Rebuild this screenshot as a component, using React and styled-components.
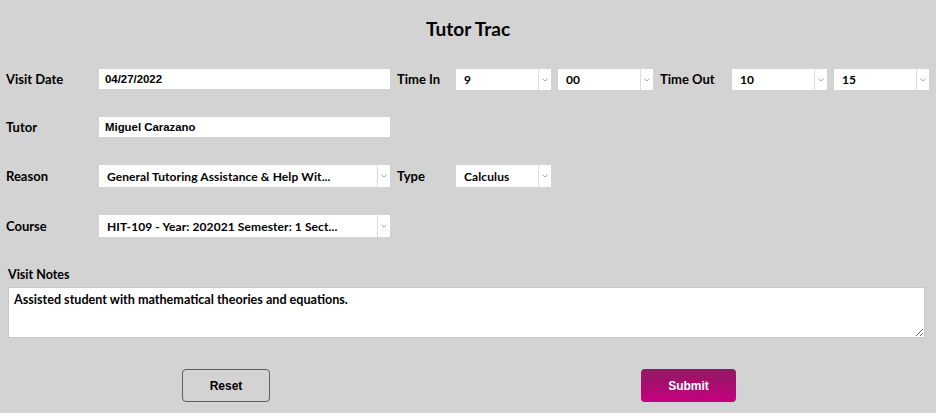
import React, { useState } from 'react'
import styled, { createGlobalStyle } from 'styled-components'

const GlobalStyle = createGlobalStyle`
  html, body {
    margin: 0;
    padding: 0;
    background: #d3d3d3;
  }
  body {
    font-family: Lato, 'Liberation Sans', sans-serif;
    color: #000;
  }
`

const Page = styled.div`
  width: 936px;
  height: 413px;
  background: #d3d3d3;
  overflow: hidden;
`

const Title = styled.h1`
  margin: 0;
  height: 56px;
  display: flex;
  align-items: center;
  justify-content: center;
  font-size: 19px;
  font-weight: 700;
`

const FieldsGrid = styled.div`
  display: grid;
  grid-template-columns: 86px 291px 52px 95px 95px 65px 95px 95px;
  grid-template-rows: 20px 20px 22px 22px;
  column-gap: 7px;
  row-gap: 28px;
  align-items: center;
  padding: 13px 0 0 6px;
`

const Label = styled.div`
  font-size: 13px;
  font-weight: 700;
  white-space: nowrap;
`

const TextInput = styled.input`
  box-sizing: border-box;
  height: 20px;
  width: 100%;
  border: none;
  background: #fff;
  padding: 0 6px;
  font-family: 'Liberation Sans', Arial, sans-serif;
  font-weight: 700;
  font-size: 11.4px;
  color: #000;
  outline: none;
`

const SelectBox = styled.div`
  box-sizing: border-box;
  display: flex;
  height: ${p => (p.$tall ? 22 : 21)}px;
  margin-top: ${p => (p.$tall ? 0 : 1)}px;
  width: 100%;
  background: #fff;
`

const SelectValue = styled.div`
  flex: 1;
  display: flex;
  align-items: center;
  padding-left: 8px;
  font-size: 12px;
  font-weight: 700;
  letter-spacing: 0.1px;
  white-space: nowrap;
  overflow: hidden;
`

const SelectArrow = styled.div`
  width: 12px;
  border-left: 1px solid #dcdcdc;
  display: flex;
  align-items: center;
  justify-content: center;
`

const Span = styled.div`
  grid-column: ${p => p.$col};
`

const NotesBlock = styled.div`
  padding: 30px 11px 0 8px;
`

const NotesLabel = styled(Label)`
  margin-bottom: 5px;
  font-size: 12.5px;
`

const Notes = styled.textarea`
  box-sizing: border-box;
  display: block;
  width: 100%;
  height: 51px;
  border: 1px solid #c8c8c8;
  background: #fff;
  padding: 4px 5px;
  font-family: Lato, 'Liberation Sans', sans-serif;
  font-weight: 700;
  font-size: 12.6px;
  color: #000;
  outline: none;
  resize: vertical;
`

const Actions = styled.div`
  display: flex;
  gap: 371px;
  padding: 31px 0 0 182px;
`

const Button = styled.button`
  box-sizing: border-box;
  width: ${p => (p.$primary ? 95 : 88)}px;
  height: 33px;
  border-radius: 4px;
  border: ${p => (p.$primary ? 'none' : '1px solid #5f5f5f')};
  background: ${p =>
    p.$primary ? 'linear-gradient(to bottom, #901a63, #c6007f)' : 'transparent'};
  color: ${p => (p.$primary ? '#fff' : '#000')};
  font-family: 'Liberation Sans', Arial, sans-serif;
  font-weight: 700;
  font-size: 12px;
  cursor: pointer;
`

const Chevron = () => (
  <svg width="6" height="4" viewBox="0 0 6 4">
    <path d="M0.5 0.8 L3 3 L5.5 0.8" fill="none" stroke="#a8a8a8" strokeWidth="1" />
  </svg>
)

const Select = ({ value, tall }) => (
  <SelectBox $tall={tall}>
    <SelectValue>{value}</SelectValue>
    <SelectArrow>
      <Chevron />
    </SelectArrow>
  </SelectBox>
)

const App = () => {
  const [notes, setNotes] = useState('Assisted student with mathematical theories and equations.')

  return (
    <Page>
      <GlobalStyle />
      <Title>Tutor Trac</Title>
      <FieldsGrid>
        <Label>Visit Date</Label>
        <TextInput defaultValue="04/27/2022" />
        <Label>Time In</Label>
        <Select value="9" />
        <Select value="00" />
        <Label>Time Out</Label>
        <Select value="10" />
        <Select value="15" />

        <Label>Tutor</Label>
        <TextInput defaultValue="Miguel Carazano" />
        <Span $col="3 / -1" />

        <Label>Reason</Label>
        <Select tall value="General Tutoring Assistance & Help Wit..." />
        <Label>Type</Label>
        <Select tall value="Calculus" />
        <Span $col="5 / -1" />

        <Label>Course</Label>
        <Select tall value="HIT-109 - Year: 202021 Semester: 1 Sect..." />
        <Span $col="3 / -1" />
      </FieldsGrid>
      <NotesBlock>
        <NotesLabel>Visit Notes</NotesLabel>
        <Notes value={notes} onChange={e => setNotes(e.target.value)} />
      </NotesBlock>
      <Actions>
        <Button type="button">Reset</Button>
        <Button type="submit" $primary>
          Submit
        </Button>
      </Actions>
    </Page>
  )
}

export default App
